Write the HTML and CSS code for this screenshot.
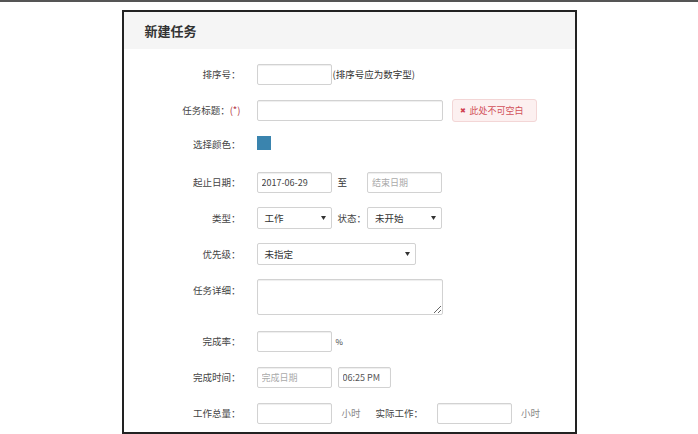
FILE: index.html
```html
<!DOCTYPE html>
<html lang="zh-CN">
<head>
<meta charset="utf-8">
<title>新建任务</title>
<link rel="stylesheet" href="styles.css">
</head>
<body>
<div class="topline"></div>
<div class="panel">
  <div class="panel-head"><span class="panel-title">新建任务</span></div>
  <div class="form">
    <div class="row">
      <label class="lbl">排序号：</label>
      <input class="ipt w75" type="text">
      <span class="hint">(排序号应为数字型)</span>
    </div>
    <div class="row">
      <label class="lbl">任务标题：<span class="req">(*)</span></label>
      <input class="ipt w186" type="text">
      <span class="err"><span class="err-x">✖</span>此处不可空白</span>
    </div>
    <div class="row row-color">
      <label class="lbl lbl-color">选择颜色：</label>
      <span class="swatch"></span>
    </div>
    <div class="row">
      <label class="lbl">起止日期：</label>
      <input class="ipt w75" type="text" value="2017-06-29">
      <span class="to">至</span>
      <input class="ipt w75" type="text" placeholder="结束日期">
    </div>
    <div class="row">
      <label class="lbl">类型：</label>
      <div class="sel w75"><span>工作</span><svg class="arrow" width="5" height="4" viewBox="0 0 5 4"><path d="M0 0H5L2.5 4Z" fill="#333"/></svg></div>
      <span class="status">状态：</span>
      <div class="sel w75"><span>未开始</span><svg class="arrow" width="5" height="4" viewBox="0 0 5 4"><path d="M0 0H5L2.5 4Z" fill="#333"/></svg></div>
    </div>
    <div class="row">
      <label class="lbl">优先级：</label>
      <div class="sel w159"><span>未指定</span><svg class="arrow" width="5" height="4" viewBox="0 0 5 4"><path d="M0 0H5L2.5 4Z" fill="#333"/></svg></div>
    </div>
    <div class="row row-area">
      <label class="lbl lbl-area">任务详细：</label>
      <textarea class="area"></textarea>
    </div>
    <div class="row">
      <label class="lbl">完成率：</label>
      <input class="ipt w75" type="text">
      <span class="pct">%</span>
    </div>
    <div class="row">
      <label class="lbl">完成时间：</label>
      <input class="ipt w75" type="text" placeholder="完成日期">
      <input class="ipt w53 time" type="text" value="06:25 PM">
    </div>
    <div class="row">
      <label class="lbl">工作总量：</label>
      <input class="ipt w75" type="text">
      <span class="unit">小时</span>
      <span class="actual">实际工作：</span>
      <input class="ipt w75" type="text">
      <span class="unit unit2">小时</span>
    </div>
  </div>
</div>
</body>
</html>
```
FILE: styles.css
```css
html, body {
  margin: 0;
  padding: 0;
  background: #fff;
}
body {
  font-family: "Noto Sans CJK SC", "Liberation Sans", sans-serif;
  font-size: 9.5px;
  color: #444;
}
.topline {
  height: 2px;
  background: #555;
}
.panel {
  box-sizing: border-box;
  width: 455px;
  height: 424px;
  margin: 8px auto 0;
  border: 2px solid #222;
  overflow: hidden;
}
.panel-head {
  height: 37px;
  background: #f5f5f5;
  padding-left: 21px;
  display: flex;
  align-items: center;
}
.panel-title {
  font-size: 13px;
  font-weight: bold;
  color: #333;
}
.form {
  padding-top: 14px;
}
.row {
  display: flex;
  align-items: center;
  height: 22px;
  margin-bottom: 14px;
}
.lbl {
  width: 117px;
  flex-shrink: 0;
  margin-right: 16px;
  text-align: right;
  color: #444;
  white-space: nowrap;
}
.req {
  color: #b03040;
}
.ipt {
  box-sizing: border-box;
  height: 21px;
  border: 1px solid #d2d2d2;
  border-radius: 2px;
  box-shadow: inset 0 1px 1px rgba(0,0,0,0.07);
  padding: 0 4px;
  margin: 0;
  font-family: "Noto Sans CJK SC", "Liberation Sans", sans-serif;
  font-size: 9px;
  color: #444;
  background: #fff;
  outline: none;
}
.ipt::placeholder {
  color: #aaa;
}
.w75 { width: 75px; }
.w53 { width: 53px; }
.w159 { width: 159px; }
.w186 { width: 186px; }
.hint {
  margin-left: 1px;
  color: #333;
}
.err {
  box-sizing: border-box;
  margin-left: 9px;
  height: 23px;
  width: 85px;
  padding: 0 7px;
  display: flex;
  align-items: center;
  background: #fcf0f0;
  border: 1px solid #f3d6d6;
  border-radius: 3px;
  color: #d2505a;
  font-size: 9px;
  white-space: nowrap;
}
.err-x {
  font-size: 7px;
  margin-right: 4px;
  color: #d04050;
}
.row-color {
  align-items: flex-start;
}
.lbl-color {
  line-height: 18px;
}
.swatch {
  width: 14px;
  height: 14px;
  margin-top: 1px;
  background: #3a84ae;
}
.to {
  margin: 0 20px 0 6px;
  color: #333;
}
.status {
  margin: 0 1px 0 6px;
  color: #444;
  white-space: nowrap;
}
.sel {
  box-sizing: border-box;
  height: 22px;
  border: 1px solid #d2d2d2;
  border-radius: 2px;
  background: #fff;
  padding: 0 5px 0 7px;
  display: flex;
  align-items: center;
  justify-content: space-between;
  color: #333;
}
.arrow {
  display: block;
}
.row-area {
  align-items: flex-start;
  height: 36px;
  margin-bottom: 15px;
}
.lbl-area {
  line-height: 22px;
}
.area {
  box-sizing: border-box;
  width: 186px;
  height: 36px;
  margin: 0;
  border: 1px solid #d2d2d2;
  border-radius: 2px;
  box-shadow: inset 0 1px 1px rgba(0,0,0,0.07);
  font-family: "Noto Sans CJK SC", sans-serif;
  font-size: 9px;
  outline: none;
}
.pct {
  margin-left: 4px;
  color: #444;
  font-size: 8px;
}
.time {
  margin-left: 6px;
  color: #555;
}
.unit {
  margin-left: 10px;
  color: #888;
}
.actual {
  margin: 0 14px 0 15px;
  color: #444;
  white-space: nowrap;
}
.unit2 {
  margin-left: 9px;
}
```
